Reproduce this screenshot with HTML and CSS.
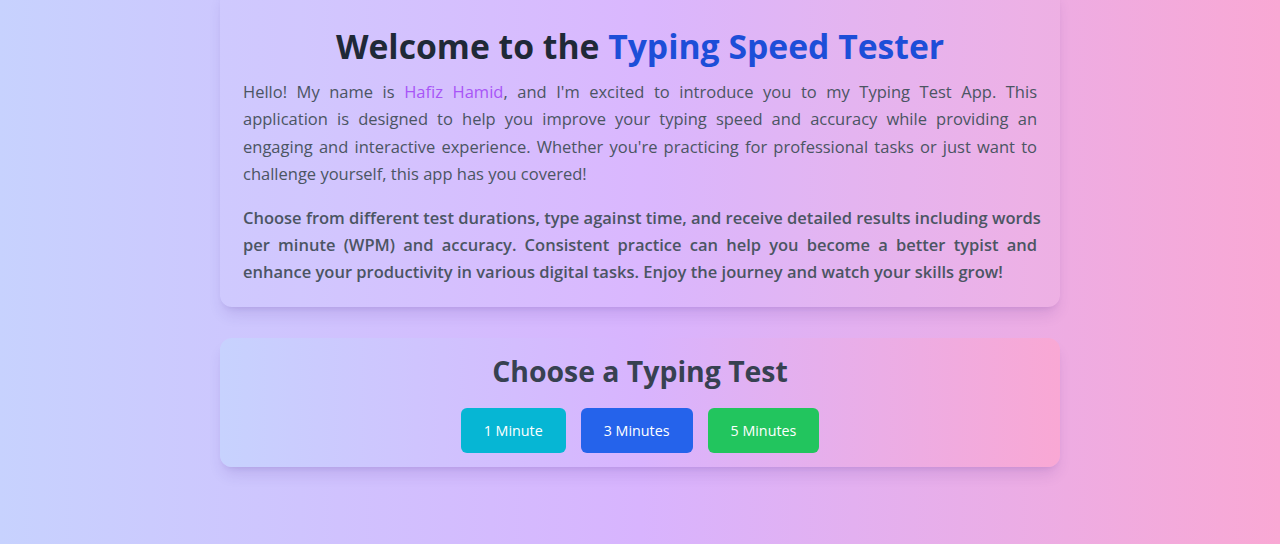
FILE: index.html
```html
<!DOCTYPE html>
<html lang="en">
<head>
<meta charset="utf-8">
<title>Typing Speed Tester</title>
<link rel="stylesheet" href="styles.css">
</head>
<body>
<main class="page">
  <section class="intro card">
    <h1 class="title">Welcome to the <span class="accent">Typing Speed Tester</span></h1>
    <p class="lead">
      <span class="line">Hello! My name is <span class="name">Hafiz Hamid</span>, and I'm excited to introduce you to my Typing Test App. This</span>
      <span class="line">application is designed to help you improve your typing speed and accuracy while providing an</span>
      <span class="line">engaging and interactive experience. Whether you're practicing for professional tasks or just want to</span>
      <span class="line last">challenge yourself, this app has you covered!</span>
    </p>
    <p class="lead strong">
      <span class="line">Choose from different test durations, type against time, and receive detailed results including words</span>
      <span class="line">per minute (WPM) and accuracy. Consistent practice can help you become a better typist and</span>
      <span class="line last">enhance your productivity in various digital tasks. Enjoy the journey and watch your skills grow!</span>
    </p>
  </section>
  <section class="chooser card">
    <h2 class="subtitle">Choose a Typing Test</h2>
    <div class="buttons">
      <button class="btn btn-cyan">1 Minute</button>
      <button class="btn btn-blue">3 Minutes</button>
      <button class="btn btn-green">5 Minutes</button>
    </div>
  </section>
</main>
</body>
</html>
```
FILE: styles.css
```css
* { box-sizing: border-box; }
html, body { margin: 0; padding: 0; }
body {
  min-height: 100vh;
  font-family: "Open Sans", "Noto Sans", sans-serif;
  background: linear-gradient(to right, #c7d2fe, #d8b4fe, #f9a8d4);
  overflow: hidden;
}
.page {
  width: 840px;
  margin: 0 auto;
  display: flex;
  flex-direction: column;
  gap: 31px;
}
.card {
  border-radius: 12px;
  box-shadow: 0 10px 15px -3px rgba(60, 20, 120, 0.12), 0 4px 6px -4px rgba(60, 20, 120, 0.12);
}
.intro {
  margin-top: -12px;
  padding: 38px 23px 21px;
  background: rgba(255, 255, 255, 0.05);
}
.title {
  margin: 0 0 12px;
  font-size: 33.7px;
  line-height: 40px;
  font-weight: 700;
  text-align: center;
  color: #1f2937;
}
.accent { color: #1d4ed8; }
.lead {
  margin: 0;
  font-size: 16.5px;
  line-height: 27.4px;
  color: #4b5563;
}
.lead + .lead { margin-top: 16px; }
.line {
  display: block;
  white-space: nowrap;
  text-align: justify;
  text-align-last: justify;
}
.line.last { text-align-last: left; }
.strong { font-weight: 600; }
.name { color: #a855f7; }
.chooser {
  padding: 15px 24px 14px;
  background: linear-gradient(to right, #c7d2fe, #d8b4fe, #f9a8d4);
  text-align: center;
}
.subtitle {
  margin: 0 0 19px;
  font-size: 28.4px;
  line-height: 36px;
  font-weight: 700;
  color: #374151;
}
.buttons {
  display: flex;
  justify-content: center;
  gap: 15px;
}
.btn {
  height: 45px;
  padding: 0 23px;
  border: 0;
  border-radius: 6px;
  font-family: inherit;
  font-size: 14.3px;
  color: #ffffff;
  cursor: pointer;
}
.btn-cyan { background: #06b6d4; }
.btn-blue { background: #2563eb; }
.btn-green { background: #22c55e; }
```
